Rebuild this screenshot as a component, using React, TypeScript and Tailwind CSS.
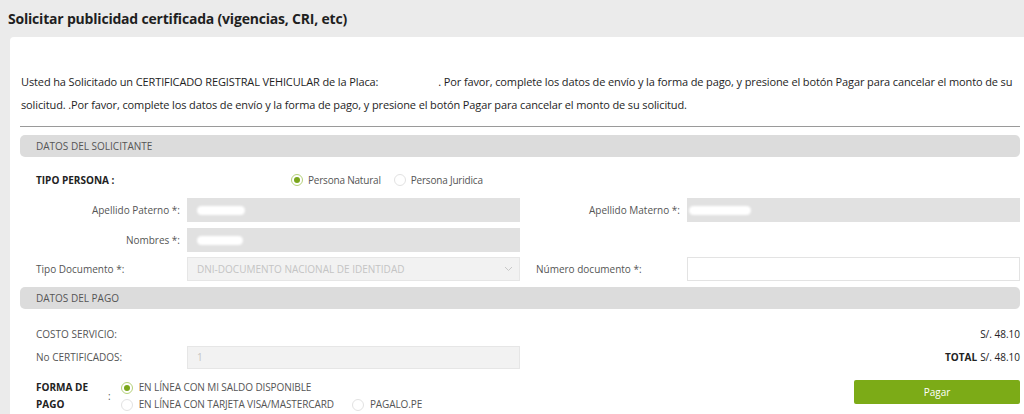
import React from "react";

const font = { fontFamily: '"Open Sans", "Noto Sans", sans-serif' };

function Radio({ checked }: { checked?: boolean }) {
  return (
    <span
      className={`inline-flex h-[12px] w-[12px] shrink-0 items-center justify-center rounded-full border bg-white ${
        checked ? "border-[#b5d17a]" : "border-[#e2e2e2]"
      }`}
    >
      {checked && <span className="h-[6px] w-[6px] rounded-full bg-[#7aa61c]" />}
    </span>
  );
}

function Section({ title }: { title: string }) {
  return (
    <div className="flex h-[22px] items-center rounded-[5px] bg-[#dcdcdc] pl-[16px] text-[10px] text-[#555]">
      {title}
    </div>
  );
}

function Blur({ w }: { w: number }) {
  return <span className="block h-[9px] rounded-full bg-white blur-[1px]" style={{ width: w }} />;
}

export default function App() {
  return (
    <div className="h-[414px] w-[1024px] overflow-hidden bg-[#ebebeb] text-[#222]" style={font}>
      <div className="flex h-[37px] items-center pl-[8px] pb-[1px]">
        <h1 className="text-[14px] font-bold tracking-[-0.2px] text-[#1f1f1f]">
          Solicitar publicidad certificada (vigencias, CRI, etc)
        </h1>
      </div>
      <div className="ml-[10px] h-[377px] rounded-tl-[4px] bg-white pl-[10px] pr-[4px]">
        <p className="pt-[33px] pl-[1px] text-[11px] leading-[23px] tracking-[-0.12px] text-[#1e1e1e]">
          <span className="pr-[60px]">Usted ha Solicitado un CERTIFICADO REGISTRAL VEHICULAR de la Placa:</span>. Por favor, complete los datos de envío y la forma de pago, y presione el botón Pagar para cancelar el monto de su solicitud. .Por favor, complete los datos de envío y la forma de pago, y presione el botón Pagar para cancelar el monto de su solicitud.
        </p>
        <div className="mt-[10px] h-px bg-[#9a9a9a]" />
        <div className="mt-[8px]">
          <Section title="DATOS DEL SOLICITANTE" />
        </div>
        <div className="grid grid-cols-[167px_333px_167px_333px] gap-y-[6px] text-[10px] text-[#555]">
          <div className="col-span-4 flex h-[34px] items-center pt-[12px]">
            <div className="w-[167px] pl-[16px] font-bold text-[#222]">TIPO PERSONA :</div>
            <div className="ml-[104px] flex items-center gap-[5px]">
              <Radio checked />
              <span className="tracking-[-0.2px]">Persona Natural</span>
              <span className="ml-[3px]" />
              <Radio />
              <span className="tracking-[-0.2px]">Persona Juridica</span>
            </div>
          </div>

          <div className="mt-[1px] flex h-[24px] items-center justify-end pr-[7px]">Apellido Paterno *:</div>
          <div className="mt-[1px] flex h-[24px] items-center bg-[#e1e1e1] pl-[10px]">
            <Blur w={48} />
          </div>
          <div className="mt-[1px] flex h-[24px] items-center justify-end pr-[7px]">Apellido Materno *:</div>
          <div className="mt-[1px] flex h-[24px] items-center bg-[#e1e1e1] pl-[2px]">
            <Blur w={62} />
          </div>

          <div className="flex h-[24px] items-center justify-end pr-[7px]">Nombres *:</div>
          <div className="flex h-[24px] items-center bg-[#e1e1e1] pl-[10px]">
            <Blur w={46} />
          </div>
          <div className="col-span-2" />

          <div className="-mt-[1px] flex h-[24px] items-center pl-[16px]">Tipo Documento *:</div>
          <div className="-mt-[1px] flex h-[24px] items-center justify-between border border-[#e6e6e6] bg-[#f2f2f2] pl-[9px] pr-[6px] text-[#c4c4c4]">
            <span>DNI-DOCUMENTO NACIONAL DE IDENTIDAD</span>
            <svg width="9" height="6" viewBox="0 0 9 6" fill="none">
              <path d="M1 1l3.5 3.5L8 1" stroke="#c8c8c8" strokeWidth="1" />
            </svg>
          </div>
          <div className="-mt-[1px] flex h-[24px] items-center pl-[16px]">Número documento *:</div>
          <div className="-mt-[1px] h-[24px] border border-[#e3e3e3] bg-white" />
        </div>
        <div className="mt-[6px]">
          <Section title="DATOS DEL PAGO" />
        </div>
        <div className="mt-[13px] grid grid-cols-[167px_333px_1fr] text-[10px] text-[#555]">
          <div className="flex h-[24px] items-center pl-[16px]">COSTO SERVICIO:</div>
          <div className="h-[24px]" />
          <div className="flex h-[24px] items-center justify-end text-[#222]">S/. 48.10</div>

          <div className="flex h-[23px] items-center pl-[16px]">No CERTIFICADOS:</div>
          <div className="flex h-[23px] items-center border border-[#e6e6e6] bg-[#f2f2f2] pl-[9px] text-[#c4c4c4]">1</div>
          <div className="flex h-[23px] items-center justify-end text-[#222]">
            <span className="mr-[3px] font-bold">TOTAL</span>S/. 48.10
          </div>
        </div>
        <div className="mt-[10px] flex text-[10px]">
          <div className="flex w-[88px] flex-col pl-[16px] font-bold leading-[17px] text-[#222]">
            <span>FORMA DE</span>
            <span>PAGO</span>
          </div>
          <div className="flex items-center pr-[10px] text-[#555]">:</div>
          <div className="flex flex-col leading-[17px] text-[#555]">
            <div className="flex items-center gap-[6px]">
              <Radio checked />
              <span className="tracking-[-0.1px]">EN LÍNEA CON MI SALDO DISPONIBLE</span>
            </div>
            <div className="flex items-center gap-[6px]">
              <Radio />
              <span className="tracking-[-0.1px]">EN LÍNEA CON TARJETA VISA/MASTERCARD</span>
              <span className="ml-[6px]" />
              <Radio />
              <span className="tracking-[-0.1px]">PAGALO.PE</span>
            </div>
          </div>
          <div className="ml-auto flex flex-col items-end pt-[1px]">
            <button className="flex h-[24px] w-[166px] items-center justify-center rounded-[2px] bg-[#7cab17] text-[10px] text-white">
              Pagar
            </button>
          </div>
        </div>
      </div>
    </div>
  );
}
